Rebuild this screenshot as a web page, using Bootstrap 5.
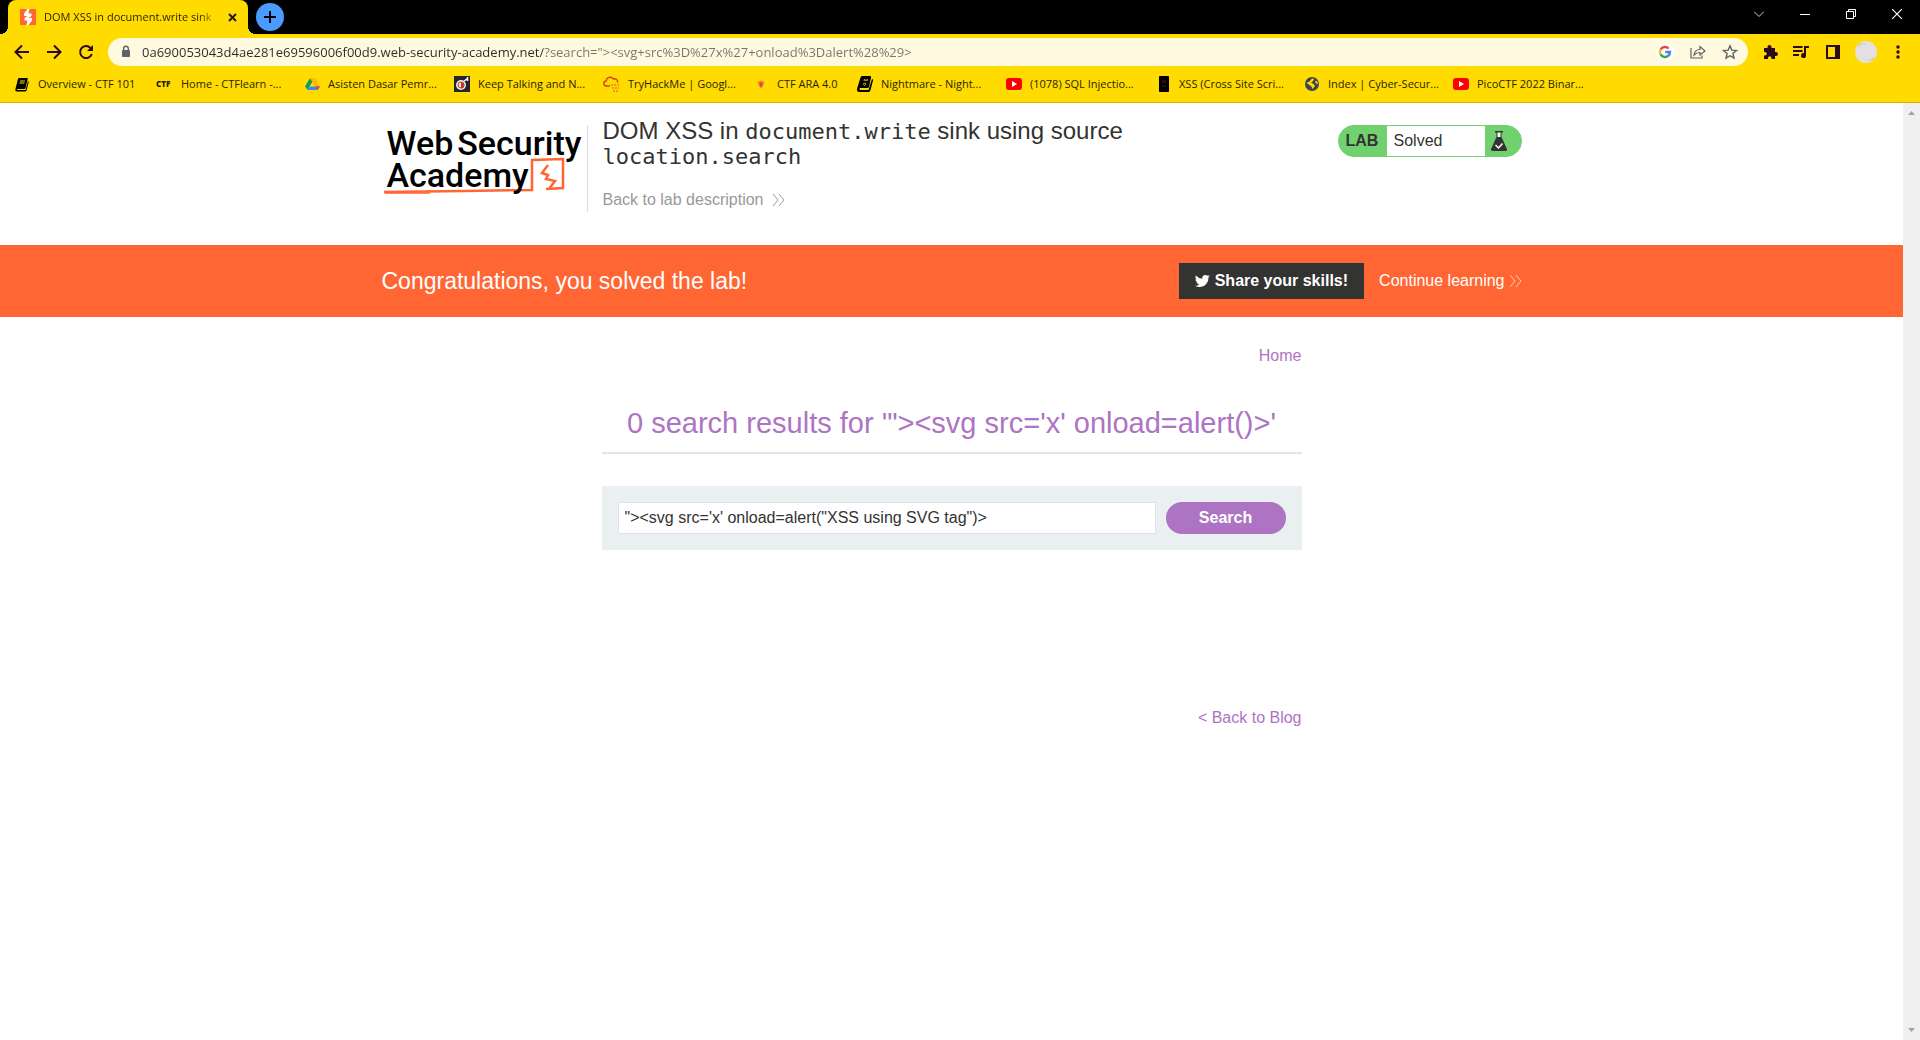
<!DOCTYPE html>
<html lang="en">
<head>
<meta charset="utf-8">
<meta name="viewport" content="width=device-width, initial-scale=1">
<title>DOM XSS in document.write sink using source location.search</title>
<link href="https://cdn.jsdelivr.net/npm/bootstrap@5.3.0/dist/css/bootstrap.min.css" rel="stylesheet">
<style>
  :root { --ui: "Open Sans", "Noto Sans", sans-serif; --page: "Liberation Sans", Arial, sans-serif; }
  body { font-family: var(--page); font-size: 16px; line-height: 24px; color: #333332; }
  a { text-decoration: none; }
  svg { flex: none; display: block; }
  button { font-family: inherit; }
  .plain-btn { background: none; border: 0; padding: 0; color: inherit; }

  /* browser frame */
  .chrome-ui { font-family: var(--ui); font-size: 11px; line-height: 16px; color: #2a1520; }
  .tab-strip { background: #000; height: 34px; padding-left: 8px; }
  .page-tab { background: #ffdb00; width: 240px; border-radius: 8px 8px 0 0; padding: 0 11px 0 12px; gap: 8px; color: #2a1f00; }
  .page-tab::before, .page-tab::after { content: ""; position: absolute; bottom: 0; width: 8px; height: 8px; }
  .page-tab::before { left: -8px; background: radial-gradient(circle at 0 0, #000 8px, #ffdb00 8px); }
  .page-tab::after { right: -8px; background: radial-gradient(circle at 100% 0, #000 8px, #ffdb00 8px); }
  .tab-title { overflow: hidden; white-space: nowrap; -webkit-mask-image: linear-gradient(90deg, #000 88%, transparent); }
  .new-tab { width: 28px; height: 28px; margin: 3px 0 0 8px; background: #4a9bff; border-radius: 50%; }
  .window-btn { width: 46px; height: 28px; color: #fff; }
  .tool-row { background: #ffdb00; height: 36px; padding: 0 16px 0 14px; gap: 15px; }
  .nav-group { gap: 16px; width: 79px; }
  .omnibox { background: #fff9df; height: 28px; border-radius: 14px; padding: 0 10px 0 12px; }
  .omnibox input { border: 0; outline: 0; padding: 0; margin-left: 10px; font-size: 13px; height: 28px; color: transparent;
    background: linear-gradient(90deg, #2b2b2b 401px, #76746c 401px); -webkit-background-clip: text; background-clip: text; }
  .bookmark-row { background: #ffdb00; height: 33px; padding: 0 14px 4px 14px; border-bottom: 1px solid #d6b300; }
  .bookmark-link { flex: 0 0 149px; gap: 8px; color: #2a1f00; white-space: nowrap; }
  .bookmark-link.short-one { flex-basis: 142px; }
  .bookmark-link.shorter-one { flex-basis: 105px; }
  .ctf-mark { width: 17px; font-weight: 800; font-size: 8px; }

  /* scroll track */
  .scroll-track { width: 17px; background: #f0f0f0; padding: 8px 5px; }

  /* lab page */
  .lab-width { width: 100%; max-width: 1140px; margin: 0 auto; }
  .lab-header { padding: 15px 0 33px; }
  .logo-cell { width: 206px; height: 87px; margin-top: 7px; padding: 2px 0 0 5px; border-right: 1px solid #dcdcdc;
    font: 500 34px/32px Roboto, "Liberation Sans", sans-serif; color: #000; }
  .logo-cell .first-line { gap: 4px; }
  .logo-mark { position: absolute; left: 0; top: 0; z-index: -1; }
  .title-cell { padding-left: 15px; max-width: 640px; }
  .lab-title { font-size: 24px; line-height: 25px; font-weight: 400; margin: 0 0 20px; }
  .lab-title code { font-family: "DejaVu Sans Mono", monospace; font-size: 22px; line-height: 1; color: inherit; }
  .back-link { color: #999; gap: 9px; }
  .status-pill { height: 32px; margin-top: 7px; border: 1px solid #72d16f; background: #72d16f; border-radius: 16px; }
  .status-pill strong { width: 48px; padding-left: 7px; }
  .status-pill span { width: 98px; padding-left: 7px; background: #fff; line-height: 29px; }
  .status-pill svg { margin: 5px 13px 0 5px; }
  .solved-bar { background: #f63; color: #fff; min-height: 72px; }
  .solved-bar h2 { font-size: 23px; line-height: 32px; font-weight: 400; margin: 0; }
  .share-btn { background: #333332; color: #fff; height: 36px; padding: 0 16px; gap: 5px; font-weight: 700; margin-right: 15px; }
  .blog-width { width: 100%; max-width: 700px; margin: 0 auto; }
  .blog-width a, .blog-width h1 { color: #ad74c3; }
  .home-row { padding-top: 27px; }
  .blog-width h1 { font-size: 29px; line-height: 40px; font-weight: 400; margin: 0; padding: 35px 0 9px; border-bottom: 2px solid #e4e4e4; }
  .search-box { background: #eaeff2; margin-top: 32px; padding: 16px; gap: 10px; }
  .search-box input { height: 32px; border: 1px solid #e0e3e5; padding: 0 6px; background: #fff; color: #333332; outline: 0; }
  .search-box button { width: 120px; height: 32px; border: 0; border-radius: 16px; background: #ad74c3; color: #fff; font-weight: 700; }
  .blog-link-row { margin-top: 156px; }
</style>
<script src="https://cdn.jsdelivr.net/npm/bootstrap@5.3.0/dist/js/bootstrap.bundle.min.js"></script>
</head>
<body class="d-flex flex-column min-vh-100 bg-white">

<div class="chrome-ui">
  <div class="tab-strip d-flex">
    <div class="page-tab position-relative d-flex align-items-center">
      <svg width="16" height="16" viewBox="0 0 16 16"><path fill="#f63" d="M0 0h16v16H0z"/><path fill="#fff" d="M7.500 0h2L8.500 4.500h3V7L8.500 9H12v2.500L8.500 16H6.500l1-4.500h-3V9l3-2H4V4.500z"/></svg>
      <span class="tab-title flex-grow-1">DOM XSS in document.write sink</span>
      <button class="plain-btn" aria-label="Close tab"><svg width="9" height="9" viewBox="0 0 9 9" stroke="#2a1520" stroke-width="2"><path d="M1 1l7 7M8 1L1 8"/></svg></button>
    </div>
    <button class="plain-btn new-tab d-flex align-items-center justify-content-center" aria-label="New tab"><svg width="12" height="12" viewBox="0 0 12 12" stroke="#000" stroke-width="2"><path d="M6 0v12M0 6h12"/></svg></button>
    <div class="ms-auto d-flex">
      <button class="plain-btn window-btn d-flex align-items-center justify-content-center" aria-label="Search tabs"><svg width="10" height="6" viewBox="0 0 10 6" fill="none" stroke="#ccc"><path d="M0 .5l5 5 5-5"/></svg></button>
      <button class="plain-btn window-btn d-flex align-items-center justify-content-center" aria-label="Minimize"><svg width="10" height="1" viewBox="0 0 10 1"><path fill="#fff" d="M0 0h10v1H0z"/></svg></button>
      <button class="plain-btn window-btn d-flex align-items-center justify-content-center" aria-label="Restore"><svg width="10" height="10" viewBox="0 0 10 10" fill="none" stroke="#fff"><path d="M.5 2.500h7v7h-7zM2.500 2.500v-2h7v7h-2"/></svg></button>
      <button class="plain-btn window-btn d-flex align-items-center justify-content-center" aria-label="Close"><svg width="10" height="10" viewBox="0 0 10 10" stroke="#fff" stroke-width="1.200"><path d="M0 0l10 10M10 0L0 10"/></svg></button>
    </div>
  </div>

  <div class="tool-row d-flex align-items-center">
    <div class="nav-group d-flex">
      <button class="plain-btn" aria-label="Back"><svg width="16" height="16" viewBox="0 0 16 16" fill="none" stroke="#2a0a1c" stroke-width="2"><path d="M15 8H2M8 1.500L1.500 8 8 14.500"/></svg></button>
      <button class="plain-btn" aria-label="Forward"><svg width="16" height="16" viewBox="0 0 16 16" fill="none" stroke="#2a0a1c" stroke-width="2"><path d="M1 8h13M8 1.500L14.500 8 8 14.500"/></svg></button>
      <button class="plain-btn" aria-label="Reload"><svg width="16" height="16" viewBox="0 0 16 16" fill="none" stroke="#2a0a1c" stroke-width="2"><path d="M13.800 10A6 6 0 1 1 12.500 4"/><path fill="#2a0a1c" stroke="none" d="M15 1v6H9z"/></svg></button>
    </div>
    <div class="omnibox flex-grow-1 d-flex align-items-center">
      <svg width="12" height="14" viewBox="0 0 12 14"><path fill="#5f6368" d="M3 5h6q1 0 1 1v5q0 1-1 1H3q-1 0-1-1V6q0-1 1-1z"/><path fill="none" stroke="#5f6368" stroke-width="1.400" d="M3.700 5V3.500a2.300 2.300 0 0 1 4.600 0V5"/></svg>
      <input class="flex-grow-1" type="text" aria-label="Address" value="0a690053043d4ae281e69596006f00d9.web-security-academy.net/?search=&quot;&gt;&lt;svg+src%3D%27x%27+onload%3Dalert%28%29&gt;">
      <svg width="18" height="18" viewBox="0 0 18 18"><circle cx="9" cy="9" r="9" fill="#fff"/><g fill="none" stroke-width="2.400"><path stroke="#ea4335" d="M4.600 6.500A5 5 0 0 1 12.600 5.500"/><path stroke="#fbbc05" d="M4.600 11.500a5 5 0 0 1 0-5"/><path stroke="#34a853" d="M4.600 11.400a5 5 0 0 0 7.800 1.300"/><path stroke="#4285f4" d="M12.300 12.800A5 5 0 0 0 14 9H9.200"/></g></svg>
      <svg class="ms-3" width="16" height="16" viewBox="0 0 16 16" fill="none" stroke="#5f6368" stroke-width="1.200"><path d="M1 4v10h11v-2.500M4 11c.5-4 3-5.500 6-5.500V2.500L15 7l-5 4V8.500c-3 0-4.500.8-6 2.500z"/></svg>
      <svg class="ms-3" width="16" height="16" viewBox="0 0 16 16" fill="none" stroke="#5f6368" stroke-width="1.400"><path d="M8 1.800l1.800 4.300 4.700.4-3.600 3 1.100 4.600L8 11.700l-4 2.400 1.100-4.600-3.600-3 4.700-.4z"/></svg>
    </div>
    <button class="plain-btn" aria-label="Extensions"><svg width="15" height="16" viewBox="0 0 15 16"><path fill="#2a0a1c" d="M1 4h3.500V3a2 2 0 0 1 4 0v1H12v4h1a2 2 0 0 1 0 4h-1v3H8.500v-1a1.700 1.700 0 0 0-3.500 0v1H1v-3.500h1a1.700 1.700 0 0 0 0-3.500H1z"/></svg></button>
    <button class="plain-btn" aria-label="Media"><svg width="16" height="16" viewBox="0 0 16 16"><path fill="#2a0a1c" d="M0 2h9.500v2H0zM0 6h9.500v2H0zM0 10h6v2H0zM11 2h5v2h-3v7.500a2.500 2.500 0 1 1-2-2.400z"/></svg></button>
    <button class="plain-btn" aria-label="Side panel"><svg width="16" height="14" viewBox="0 0 16 14"><path fill="#2a0a1c" fill-rule="evenodd" d="M2 0h14v14H2zM4 2v10h7V2z"/></svg></button>
    <button class="plain-btn" aria-label="Profile"><svg width="22" height="22" viewBox="0 0 22 22"><circle cx="11" cy="11" r="11" fill="#e4dfe0"/><path d="M4 6V3h6M18 16v3h-6" fill="none" stroke="#c4bebe" stroke-dasharray="3 1"/></svg></button>
    <button class="plain-btn" aria-label="Menu"><svg width="12" height="14" viewBox="0 0 12 14" fill="#2a0a1c"><circle cx="6" cy="2" r="1.700"/><circle cx="6" cy="7" r="1.700"/><circle cx="6" cy="12" r="1.700"/></svg></button>
  </div>

  <nav class="bookmark-row d-flex align-items-center" aria-label="Bookmarks">
    <a href="#" class="bookmark-link short-one d-flex align-items-center"><svg width="16" height="16" viewBox="0 0 16 16"><path fill="#000" d="M5 2h8q1 0 .7 1l-2.200 9q-.2 1-1.300 1H3q-.5 1 .5 1h8l2.500-9q1 0 .7 1l-2 8q-.3 1.500-1.500 1.500H3q-2 0-1.700-2L4 3q.3-1 1-1z"/><path stroke="#ffdb00" d="M6 5h5M5.500 7h5"/></svg>Overview - CTF 101</a>
    <a href="#" class="bookmark-link d-flex align-items-center"><span class="ctf-mark">CTF</span>Home - CTFlearn -...</a>
    <a href="#" class="bookmark-link d-flex align-items-center"><svg width="15" height="16" viewBox="0 0 15 16"><path fill="#0f9d58" d="M5 2L0 10.500 2.500 14l5-8.500z"/><path fill="#ffba00" d="M5 2h5l5 8.500h-5z"/><path fill="#4285f4" d="M5 10.500h10L12.500 14h-10z"/><path fill="#ea4335" d="M10.500 10.500H15L12.500 14z"/></svg>Asisten Dasar Pemr...</a>
    <a href="#" class="bookmark-link d-flex align-items-center"><svg width="16" height="16" viewBox="0 0 16 16"><path fill="#22252d" d="M0 0h16v16H0z"/><circle cx="7" cy="9" r="5" fill="#eee9e4"/><path fill="#c33b24" d="M7 6a3 3 0 0 1 0 6.500z"/><circle cx="7" cy="9" r="3" fill="none" stroke="#c33b24"/><path stroke="#fff" stroke-width="1.500" d="M10 5l3-2M13.500 1v4"/></svg>Keep Talking and N...</a>
    <a href="#" class="bookmark-link d-flex align-items-center"><svg width="17" height="16" viewBox="0 0 17 16" fill="none" stroke="#d9401a" stroke-width="1.400"><path d="M7 10H3.500a2.500 2.500 0 0 1-.3-5A4 4 0 0 1 10.500 3a3 3 0 0 1 4 3.500"/><path stroke="#e9822b" stroke-dasharray="2 1" d="M8 9h8M9 12h7M10 15h5"/></svg>TryHackMe | Googl...</a>
    <a href="#" class="bookmark-link shorter-one d-flex align-items-center"><svg width="17" height="16" viewBox="0 0 17 16"><path fill="#ef6a35" d="M6 5l2 1 1-2 1 2 2-1-.5 4L9 12.500 6.500 9z"/><path fill="#d8425c" d="M8 7h2v3H8z"/></svg>CTF ARA 4.0</a>
    <a href="#" class="bookmark-link d-flex align-items-center"><svg width="16" height="16" viewBox="0 0 16 16"><path fill="#000" d="M5 0h8q1.500 0 1 1.500L12 11q-.3 1-1.300 1H3q-1 1 0 2h8.500L15 3q1.500 0 1 1.500L13.500 14q-.4 2-2 2H2q-2.300 0-2-3L3.500 1.500Q4 0 5 0z"/><path fill="none" stroke="#c9a400" d="M7 5l.5-2L9 5l1.500-2-.5 2M6 9l1-2 2 1-2 2"/></svg>Nightmare - Night...</a>
    <a href="#" class="bookmark-link d-flex align-items-center"><svg width="16" height="16" viewBox="0 0 16 16"><rect y="2" width="16" height="12" rx="3" fill="#f00"/><path fill="#fff" d="M6 5l5 3-5 3z"/></svg>(1078) SQL Injectio...</a>
    <a href="#" class="bookmark-link d-flex align-items-center"><svg width="16" height="16" viewBox="0 0 16 16"><rect x="4" width="10" height="16" rx="1" fill="#000"/><path stroke="#5c0d0d" d="M7 4l4 3M11 4L7 7M7 10h4"/></svg>XSS (Cross Site Scri...</a>
    <a href="#" class="bookmark-link d-flex align-items-center"><svg width="16" height="16" viewBox="0 0 16 16"><circle cx="8" cy="8" r="7" fill="#3f4550"/><path fill="#ffdb00" d="M8 2.500l2 .5-1 2-2 1.500L9.500 8 11 10l-2.500 3-1-2.500L4 8 2.500 6.500 5 6zM11 5h2l1 3-2-.500z"/></svg>Index | Cyber-Secur...</a>
    <a href="#" class="bookmark-link d-flex align-items-center"><svg width="16" height="16" viewBox="0 0 16 16"><rect y="2" width="16" height="12" rx="3" fill="#f00"/><path fill="#fff" d="M6 5l5 3-5 3z"/></svg>PicoCTF 2022 Binar...</a>
  </nav>
</div>

<div class="flex-grow-1 d-flex">
  <main class="flex-grow-1">
    <header class="lab-width lab-header d-flex align-items-start">
      <a href="#" class="logo-cell d-block flex-shrink-0 position-relative z-0">
        <svg class="logo-mark" width="204" height="80" viewBox="0 0 204 80" fill="none" stroke="#f63"><path stroke-width="2.500" d="M2 67l80-1 68-1V35l31-1v29l-17 1"/><path stroke-width="1.500" d="M3 68h45"/><path stroke-width="2.500" d="M166 40l-6 8 6 2-2 4 9 2-6 8"/></svg>
        <span class="first-line d-flex"><span>Web</span><span>Security</span></span>
        <span class="d-block">Academy</span>
      </a>
      <div class="title-cell">
        <h2 class="lab-title">DOM XSS in <code>document.write</code> sink using source <code>location.search</code></h2>
        <a href="#" class="back-link d-flex align-items-center">Back to lab description <svg width="13" height="12" viewBox="0 0 13 12" fill="none" stroke="#999"><path d="M1 0l5 6-5 6M7 0l5 6-5 6"/></svg></a>
      </div>
      <div class="status-pill d-flex ms-auto overflow-hidden">
        <strong class="align-self-center">LAB</strong><span>Solved</span>
        <svg width="18" height="22" viewBox="0 0 18 22"><path fill="#fff" d="M7 1h4v6H7z"/><path fill="#333332" d="M5 0h8v1.500H5zM6.500 1.500h1V6h-1zM10.500 1.500h1V6h-1zM6.500 6h5L17 18q.5 2-1.500 2h-13Q.5 20 1 18z"/><path fill="none" stroke="#fff" stroke-width="1.500" d="M5.500 14l3 3 4-4.500"/></svg>
      </div>
    </header>

    <section class="solved-bar d-flex align-items-center">
      <div class="lab-width d-flex align-items-center">
        <h2>Congratulations, you solved the lab!</h2>
        <a href="#" class="share-btn d-flex align-items-center ms-auto"><svg width="15" height="14" viewBox="0 0 16 14"><path fill="#fff" d="M16 1.700l-1.700 1.600C14.500 9 10.300 13.500 5 13.500c-1.800 0-3.500-.5-5-1.400 1.800.1 3.400-.4 4.700-1.400-1.400 0-2.600-1-3-2.300h1.400C1.500 8 .5 6.700.5 5.100l1.400.4C.5 4.500 0 2.600 1 1.100a9 9 0 0 0 6.800 3.400C7.300 2.300 8.800.5 11 .5c1 0 1.800.4 2.400 1L15.500.8l-1.400 1.700z"/></svg>Share your skills!</a>
        <a href="#" class="d-flex align-items-center gap-1 text-white">Continue learning <svg width="13" height="12" viewBox="0 0 13 12" fill="none" stroke="#ffd0bf"><path d="M1 0l5 6-5 6M7 0l5 6-5 6"/></svg></a>
      </div>
    </section>

    <div class="blog-width">
      <div class="home-row text-end"><a href="#">Home</a></div>
      <h1 class="text-center">0 search results for '"&gt;&lt;svg src='x' onload=alert()&gt;'</h1>
      <form class="search-box d-flex" onsubmit="return false">
        <input class="flex-grow-1" type="text" aria-label="Search the blog" value="&quot;&gt;&lt;svg src='x' onload=alert(&quot;XSS using SVG tag&quot;)&gt;">
        <button type="submit">Search</button>
      </form>
      <div class="blog-link-row text-end"><a href="#">&lt; Back to Blog</a></div>
    </div>
  </main>
  <div class="scroll-track d-flex flex-column justify-content-between">
    <svg width="7" height="4" viewBox="0 0 7 4"><path fill="#a3a3a3" d="M0 4l3.500-4L7 4z"/></svg>
    <svg width="7" height="4" viewBox="0 0 7 4"><path fill="#a3a3a3" d="M0 0l3.500 4L7 0z"/></svg>
  </div>
</div>
</body>
</html>
